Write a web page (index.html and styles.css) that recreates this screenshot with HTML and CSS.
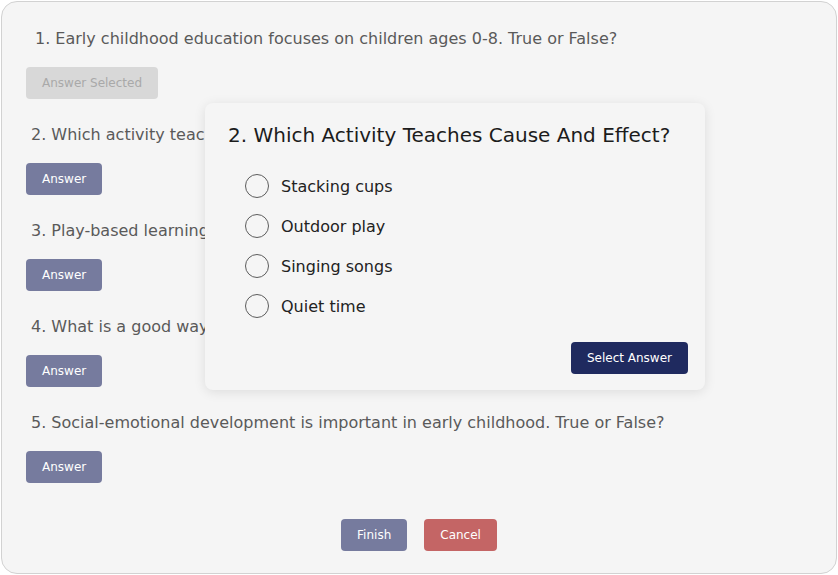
FILE: index.html
```html
<!DOCTYPE html>
<html>
<head>
<meta charset="utf-8">
<link rel="stylesheet" href="styles.css">
</head>
<body>
<div class="quiz">
  <div class="question">
    <p class="q-text q-first">1. Early childhood education focuses on children ages 0-8. True or False?</p>
    <button class="btn btn-selected">Answer Selected</button>
  </div>
  <div class="question">
    <p class="q-text q-covered">2. Which activity teaches cause and effect?</p>
    <button class="btn btn-answer">Answer</button>
  </div>
  <div class="question">
    <p class="q-text q-covered">3. Play-based learning helps children develop social skills. True or False?</p>
    <button class="btn btn-answer">Answer</button>
  </div>
  <div class="question">
    <p class="q-text q-covered">4. What is a good way to support early literacy?</p>
    <button class="btn btn-answer">Answer</button>
  </div>
  <div class="question">
    <p class="q-text">5. Social-emotional development is important in early childhood. True or False?</p>
    <button class="btn btn-answer">Answer</button>
  </div>
  <div class="footer">
    <button class="btn btn-answer">Finish</button>
    <button class="btn btn-cancel">Cancel</button>
  </div>

  <div class="modal">
    <h2 class="modal-title">2. Which Activity Teaches Cause And Effect?</h2>
    <ul class="options">
      <li class="option"><span class="radio"></span><span>Stacking cups</span></li>
      <li class="option"><span class="radio"></span><span>Outdoor play</span></li>
      <li class="option"><span class="radio"></span><span>Singing songs</span></li>
      <li class="option"><span class="radio"></span><span>Quiet time</span></li>
    </ul>
    <div class="modal-actions">
      <button class="btn btn-primary">Select Answer</button>
    </div>
  </div>
</div>
</body>
</html>
```
FILE: styles.css
```css
* { box-sizing: border-box; }
html, body { margin: 0; padding: 0; background: #ffffff; }
body {
  font-family: "DejaVu Sans", "Noto Sans", sans-serif;
  width: 838px;
  height: 575px;
  padding: 1px;
}
.quiz {
  position: relative;
  width: 836px;
  height: 573px;
  background: #f5f5f5;
  border: 1px solid #d2d2d2;
  border-radius: 16px;
  padding: 25px 0 0 24px;
  overflow: hidden;
}
.question { margin-bottom: 24px; }
.q-text {
  margin: 0 0 16px 5px;
  font-size: 16px;
  line-height: 24px;
  color: #5a5a5a;
  white-space: nowrap;
}
.q-first { margin-left: 9px; }
.q-covered {
  width: 174px;
  overflow: hidden;
}
.btn {
  font-family: inherit;
  font-size: 12px;
  height: 32px;
  padding: 0 16px;
  border: none;
  border-radius: 4px;
  color: #ffffff;
  cursor: pointer;
  line-height: 32px;
}
.btn-answer { background: #767b9e; }
.btn-selected { background: #d8d8d8; color: #a9a9a9; }
.btn-cancel { background: #c46565; }
.btn-primary { background: #1f2a5f; }
.footer {
  margin-top: 36px;
  margin-left: -24px;
  display: flex;
  justify-content: center;
  gap: 17px;
}
.modal {
  position: absolute;
  left: 203px;
  top: 101px;
  width: 500px;
  height: 287px;
  background: #f5f5f5;
  border-radius: 8px;
  box-shadow: 0 2px 12px rgba(0, 0, 0, 0.10);
  padding: 17px 17px 16px 23px;
  display: flex;
  flex-direction: column;
}
.modal-title {
  margin: 0;
  font-size: 20px;
  font-weight: normal;
  line-height: 30px;
  color: #1c1c1c;
}
.options {
  list-style: none;
  margin: 16px 0 16px 17px;
  padding: 0;
}
.option {
  display: flex;
  align-items: center;
  gap: 12px;
  height: 40px;
  font-size: 16px;
  color: #222222;
}
.radio {
  width: 24px;
  height: 24px;
  border: 1.5px solid #5c5c5c;
  border-radius: 50%;
  flex: none;
}
.modal-actions {
  display: flex;
  justify-content: flex-end;
}
```
